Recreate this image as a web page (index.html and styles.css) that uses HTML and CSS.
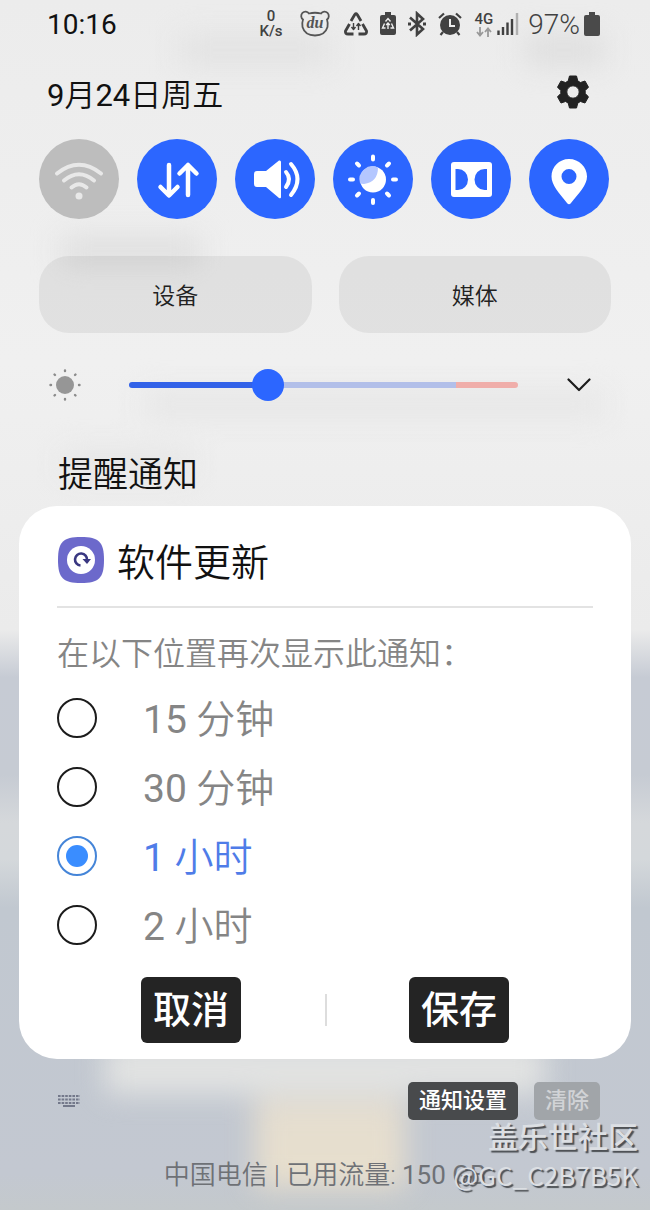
FILE: index.html
```html
<!DOCTYPE html>
<html lang="zh-CN">

<head>
  <meta charset="UTF-8" />
  <meta name="viewport" content="width=device-width, initial-scale=1" />
  <title>通知面板</title>
  <link rel="stylesheet" href="styles.css">
</head>

<body>
  <div class="panel">
    <header class="status-bar">
      <time class="clock">10:16</time>
      <div class="status-icons">
        <div class="speed"><span>0</span><span>K/s</span></div>
        <svg class="bear" width="30" height="28" viewBox="0 0 30 28" fill="none" stroke="#555" stroke-width="1.8">
          <path d="M9 3.500Q15 2 21 3.500A4.300 4.300 0 1 1 27 9.500Q28 12 27.500 17Q25 25.500 15 25.500Q5 25.500 2.500 17Q2 12 3 9.500A4.300 4.300 0 1 1 9 3.500Z" />
          <text x="15" y="18" text-anchor="middle" class="bear-text">du</text>
        </svg>
        <svg width="24" height="24" viewBox="0 0 24 24" fill="none" stroke="#414141" stroke-width="2.8" stroke-linejoin="round">
          <path d="M7 9L10.800 2.500Q12 1 13.200 2.500L17 9M18.500 12L22.500 19Q23 22 20 22H14.500M9.500 22H4Q1 22 1.500 19L5.500 12" />
          <path d="M9.500 11V17M7.500 15L9.500 17.500L11.500 15M14.500 18V12M12.500 14L14.500 11.500L16.500 14" stroke-width="1.4" />
        </svg>
        <svg width="16" height="24" viewBox="0 0 16 24">
          <path d="M5 0H11V3H14Q16 3 16 5V21Q16 23 14 23H2Q0 23 0 21V5Q0 3 2 3H5Z" fill="#444" />
          <path d="M5.500 9.500L8 6.500L10.500 9.500M11.500 11.500L13.500 16H10.500M5.500 16H2.500L4.500 11.500M8 17V11M6.200 13L8 11L9.800 13" fill="none" stroke="#eee" stroke-width="1.4" />
        </svg>
        <svg width="18" height="26" viewBox="0 0 18 26" fill="none" stroke="#414141" stroke-width="2.6">
          <path d="M2 6.500L15 18L9 23.500V2.500L15 8L2 19.500" />
          <path d="M0 13H3M15 13H18" stroke-width="2.800" />
        </svg>
        <svg width="24" height="24" viewBox="0 0 24 24" fill="none" stroke="#414141">
          <circle cx="12" cy="13" r="10" fill="#414141" stroke="none" />
          <path d="M1 6L6 1.500M18 1.500L23 6M5 20L2.500 23M19 20L21.500 23" stroke-width="2.200" />
          <path d="M12 7V14H17" stroke="#eee" stroke-width="2" />
        </svg>
        <div class="network">
          <span>4G</span>
          <svg width="16" height="10" viewBox="0 0 16 10" fill="none" stroke="#999" stroke-width="1.8">
            <path d="M4 0V8M1 5L4 8.500L7 5M12 10V2M9 5L12 1.500L15 5" />
          </svg>
        </div>
        <svg class="signal" width="22" height="22" viewBox="0 0 22 22" stroke-width="2.4">
          <path d="M1.500 22V17.500M6 22V14M10.500 22V9.500M15 22V6" stroke="#414141" />
          <path d="M20 22V0" stroke="#b0b0b0" />
        </svg>
        <span class="percent">97%</span>
        <svg class="battery" width="16" height="24" viewBox="0 0 16 24">
          <path d="M5 0H11V3H14Q16 3 16 5V22Q16 24 14 24H2Q0 24 0 22V5Q0 3 2 3H5Z" fill="#4a4a4a" />
        </svg>
      </div>
    </header>

    <div class="date-row">
      <span class="date"><span class="num">9</span>月<span class="num">24</span>日周五</span>
      <button class="icon-btn" type="button" aria-label="设置">
        <svg width="32" height="34" viewBox="0 0 32 34">
          <path fill="#222" stroke="#222" stroke-linejoin="round" fill-rule="evenodd" d="M12.500 1H19.500L20.800 6L23.500 7.500L28 6L31.500 12.200L28.200 15.500V18.500L31.500 21.800L28 28L23.500 26.500L20.800 28L19.500 33H12.500L11.200 28L8.500 26.500L4 28L0.500 21.800L3.800 18.500V15.500L0.500 12.200L4 6L8.500 7.500L11.200 6ZM16 10.800A6.200 6.200 0 1 0 16 23.200A6.200 6.200 0 1 0 16 10.800Z" />
        </svg>
      </button>
    </div>

    <div class="toggles">
      <button class="toggle off" type="button" aria-label="WLAN">
        <svg viewBox="0 0 80 80" fill="none" stroke="#e8e8e8" stroke-width="4" stroke-linecap="round">
          <path d="M18 34.500Q40 17 62 34.500M25 41.500Q40 29 55 41.500M32.500 48.500Q40 42 47.500 48.500" />
          <circle cx="40" cy="57" r="3.500" fill="#e8e8e8" stroke="none" />
        </svg>
      </button>
      <button class="toggle" type="button" aria-label="移动数据">
        <svg viewBox="0 0 80 80" fill="none" stroke="#fff" stroke-width="4.5" stroke-linecap="round" stroke-linejoin="round">
          <path d="M32 26V56M23.500 48L32 56.500L40.500 48M51 56V26M42.500 34.500L51 26L59.500 34.500" />
        </svg>
      </button>
      <button class="toggle" type="button" aria-label="声音">
        <svg viewBox="0 0 80 80" fill="none" stroke="#fff" stroke-width="4" stroke-linecap="round">
          <path d="M22 32H31L44 21.500Q46 21 46 23V58Q46 60 44 59L31 48H22Q19 48 19 45V35Q19 32 22 32Z" fill="#fff" stroke="none" />
          <path d="M51 33Q57 40 51 48M56 25Q69 40 56 56" />
        </svg>
      </button>
      <button class="toggle" type="button" aria-label="自动亮度">
        <svg viewBox="0 0 80 80" stroke="#fff" stroke-width="4" stroke-linecap="round">
          <circle cx="40" cy="40.500" r="13" fill="#fff" stroke="none" />
          <path d="M27 44A13 13 0 0 1 45 28.500Q45 43 31 45Q28 45 27 44Z" fill="#b4c7ff" stroke="none" />
          <path d="M40 17.500V20.500M40 61V64M17 40.500H20M60 40.500H63M24 24.500L26 26.500M54 54.500L56 56.500M56 24.500L54 26.500M26 54.500L24 56.500" />
        </svg>
      </button>
      <button class="toggle" type="button" aria-label="杜比全景声">
        <svg viewBox="0 0 80 80">
          <rect x="20" y="23" width="41" height="35" rx="3" fill="#fff" />
          <path d="M24.500 30H27A10 10.500 0 0 1 27 51H24.500ZM56 30H53.500A10 10.500 0 0 0 53.500 51H56Z" fill="#2c66ff" />
        </svg>
      </button>
      <button class="toggle" type="button" aria-label="位置信息">
        <svg viewBox="0 0 80 80">
          <path fill="#fff" fill-rule="evenodd" d="M40 20C30 20 22.500 28 22.500 37.500C22.500 46 30 54 38 64Q40 66.500 42 64C50 54 58 46 58 37.500C58 28 50 20 40 20ZM40 30A7.500 7.500 0 1 0 40 45A7.500 7.500 0 1 0 40 30Z" />
        </svg>
      </button>
    </div>

    <div class="tabs">
      <button class="tab" type="button">设备</button>
      <button class="tab" type="button">媒体</button>
    </div>

    <div class="brightness">
      <svg width="34" height="34" viewBox="0 0 34 34" stroke="#8b8b8b" stroke-width="2.4" stroke-linecap="round">
        <circle cx="17" cy="17" r="9" fill="#969696" stroke="none" />
        <path d="M17 2.500V3M17 31V31.500M2.500 17H3M31 17H31.500M6.500 6.500L7 7M27 27L27.500 27.500M27.500 6.500L27 7M7 27L6.500 27.500" />
      </svg>
      <input class="slider" type="range" min="0" max="200" value="69" aria-label="亮度">
      <button class="icon-btn" type="button" aria-label="展开">
        <svg width="24" height="14" viewBox="0 0 24 14" fill="none" stroke="#1c1c1c" stroke-width="2.2" stroke-linecap="round" stroke-linejoin="round">
          <path d="M1.500 1.500L12 12L22.500 1.500" />
        </svg>
      </button>
    </div>

    <h2 class="section-title">提醒通知</h2>

    <form class="card">
      <div class="card-head">
        <svg width="46" height="46" viewBox="0 0 46 46">
          <path d="M23 0C41 0 46 5 46 23S41 46 23 46S0 41 0 23S5 0 23 0Z" fill="#6c69cb" />
          <circle cx="23" cy="23" r="14" fill="#fff" />
          <path d="M22.500 28.500A6 6 0 1 1 29 23" fill="none" stroke="#393781" stroke-width="2.600" />
          <path d="M24.500 22H33L29 27Z" fill="#393781" />
        </svg>
        <h1>软件更新</h1>
      </div>
      <fieldset class="options">
        <legend>在以下位置再次显示此通知：</legend>
        <label class="option"><input type="radio" name="snooze"><span class="option-text"><span class="num">15</span> 分钟</span></label>
        <label class="option"><input type="radio" name="snooze"><span class="option-text"><span class="num">30</span> 分钟</span></label>
        <label class="option"><input type="radio" name="snooze" checked><span class="option-text"><span class="num">1</span> 小时</span></label>
        <label class="option"><input type="radio" name="snooze"><span class="option-text"><span class="num">2</span> 小时</span></label>
      </fieldset>
      <div class="actions">
        <div class="action"><button class="dark-btn" type="button">取消</button></div>
        <div class="action"><button class="dark-btn" type="button">保存</button></div>
      </div>
    </form>

    <div class="footer">
      <svg width="22" height="12" viewBox="0 0 22 12" stroke="#73788a" stroke-width="2">
        <path d="M0 1H22M0 4.500H22M0 8H22" stroke-dasharray="2.600 1" />
        <path d="M5 11H17" />
      </svg>
      <div class="footer-btns">
        <button class="small-btn" type="button">通知设置</button>
        <button class="small-btn faded" type="button">清除</button>
      </div>
    </div>
    <p class="carrier">中国电信 | 已用流量: <span class="num">150 GB</span></p>

    <div class="watermark">
      <div class="site">盖乐世社区</div>
      <div>@GC_C2B7B5K</div>
    </div>
  </div>
</body>

</html>
```
FILE: styles.css
```css
* {
  box-sizing: border-box;
}

body {
  margin: 0;
  font-family: Roboto, "Noto Sans CJK SC", sans-serif;
  color: #111;
}

button {
  border: 0;
  padding: 0;
  background: none;
  font-family: inherit;
  color: inherit;
}

svg {
  display: block;
  flex: none;
}

.num {
  font-weight: 400;
}

.panel {
  position: relative;
  z-index: 0;
  min-height: 100vh;
  overflow: hidden;
  background: linear-gradient(#ececec, #f0f0f0 30%, #ebebeb 52%, #c6cbd4 56%, #c6cbd3 64%, #d5d8db 68%, #d4d8db 71%, #c1c8d0 75%, #c3c8d1 97%, #c4c9cc);
}

/* blurred shapes of the screen behind the panel */
.panel::before {
  content: "";
  position: absolute;
  inset: 0;
  z-index: -1;
  filter: blur(14px);
  background:
    linear-gradient(#e4ddd0, #e8dfcc) 51% 98% / 150px 90px,
    linear-gradient(#e2e3e2, #e2e3e2) 50% 90% / 440px 50px,
    linear-gradient(#e2e2e2, #e2e2e2) 36% 3% / 150px 30px,
    linear-gradient(#dedede, #dedede) 92% 3% / 80px 30px,
    linear-gradient(#dfdfdf, #dfdfdf) 12% 20% / 140px 30px,
    linear-gradient(#e6e6e6, #e6e6e6) 75% 33% / 460px 26px,
    linear-gradient(#e6e6e6, #e6e6e6) 12% 38% / 130px 26px;
  background-repeat: no-repeat;
}

.status-bar {
  display: flex;
  justify-content: space-between;
  align-items: center;
  height: 48px;
  padding: 0 50px 0 47px;
}

.clock {
  font-size: 28px;
}

.status-icons {
  display: flex;
  align-items: center;
  gap: 12px;
  color: #414141;
}

.speed,
.network {
  display: flex;
  flex-direction: column;
  align-items: center;
  font-size: 15px;
  font-weight: 500;
  line-height: 15px;
}

.bear {
  margin: 0 2px 0 6px;
}

.bear-text {
  font: italic bold 16px "Liberation Serif", serif;
  fill: #555;
  stroke: none;
}

.signal {
  margin-left: -8px;
}

.percent {
  margin-left: -3px;
  font-size: 28px;
  font-weight: 300;
}

.battery {
  margin-left: -8px;
}

.date-row {
  display: flex;
  justify-content: space-between;
  align-items: center;
  height: 91px;
  padding: 0 61px 3px 47px;
}

.date {
  font-size: 31px;
  font-weight: 350;
}

.toggles {
  display: flex;
  justify-content: space-between;
  padding: 0 41px 0 39px;
}

.toggle {
  width: 80px;
  height: 80px;
  border-radius: 50%;
  background: #2c66ff;
}

.toggle.off {
  background: #bdbdbd;
}

.tabs {
  display: flex;
  gap: 27px;
  padding: 37px 39px 0;
}

.tab {
  flex: 1;
  height: 77px;
  padding-bottom: 2px;
  border-radius: 30px;
  background: rgba(0, 0, 0, 0.06);
  font-size: 23px;
  font-weight: 350;
  color: #222;
}

.brightness {
  display: flex;
  align-items: center;
  height: 104px;
  padding: 0 59px 0 48px;
}

.slider {
  appearance: none;
  flex: 1;
  height: 32px;
  margin: 0 49px 0 47px;
  background: none;
}

.slider::-webkit-slider-runnable-track {
  height: 6px;
  border-radius: 3px;
  background: linear-gradient(90deg, #3262e8 36%, #b2bfe9 36%, #b2bfe9 84%, #f0aeaa 84%);
}

.slider::-webkit-slider-thumb {
  appearance: none;
  width: 32px;
  height: 32px;
  margin-top: -13px;
  border-radius: 50%;
  background: #2c66ff;
}

.section-title {
  margin: 0;
  padding: 8px 0 0 58px;
  font-size: 35px;
  font-weight: 350;
  line-height: 61px;
}

.card {
  margin: 0 19px;
  padding: 0 38px 16px;
  border-radius: 38px;
  background: #fff;
}

.card-head {
  display: flex;
  align-items: center;
  gap: 13px;
  height: 102px;
  padding: 7px 0 0 1px;
  border-bottom: 2px solid #e3e3e3;
}

.card-head h1 {
  margin: 0;
  padding-top: 6px;
  font-size: 38px;
  font-weight: 350;
  line-height: 46px;
}

.options {
  margin: 0;
  padding: 0;
  border: 0;
  color: #858585;
}

.options legend {
  padding: 22px 0 5px;
  font-size: 32px;
  font-weight: 350;
  line-height: 48px;
}

.option {
  display: flex;
  align-items: center;
  gap: 46px;
  height: 69px;
  font-size: 39px;
  font-weight: 350;
}

.option input {
  appearance: none;
  display: grid;
  place-items: center;
  width: 40px;
  height: 40px;
  margin: 0;
  border: 2px solid #1c1c1c;
  border-radius: 50%;
}

.option input:checked {
  border-color: #4585d8;
}

.option input:checked::before {
  content: "";
  width: 22px;
  height: 22px;
  border-radius: 50%;
  background: #3a8dff;
}

.option-text {
  padding-bottom: 3px;
}

.option input:checked + .option-text {
  color: #4f7ce8;
}

.actions {
  display: flex;
  padding-top: 18px;
}

.action {
  display: flex;
  flex: 1;
  justify-content: center;
}

.action + .action {
  background: linear-gradient(#ddd, #ddd) left center / 2px 32px no-repeat;
}

.dark-btn {
  padding: 0 12px;
  border-radius: 6px;
  background: #242424;
  color: #fff;
  font-size: 38px;
  font-weight: 500;
  line-height: 66px;
}

.footer {
  display: flex;
  justify-content: space-between;
  align-items: center;
  padding: 23px 50px 0 58px;
}

.footer-btns {
  display: flex;
  gap: 16px;
}

.small-btn {
  padding: 0 11px;
  border-radius: 5px;
  background: #484a4c;
  color: #fff;
  font-size: 22px;
  font-weight: 500;
  line-height: 38px;
}

.small-btn.faded {
  background: #a1a5a9;
  color: #d1d3d6;
}

.carrier {
  margin: 0;
  padding: 36px 0 16px;
  text-align: center;
  font-size: 26px;
  font-weight: 350;
  line-height: 38px;
  color: #6e7176;
}

/* forum stamp lying over the corner of the screen */
.watermark {
  position: absolute;
  right: 12px;
  bottom: 16px;
  text-align: right;
  font-family: "Noto Sans CJK SC", sans-serif;
  font-size: 26px;
  line-height: 39px;
  color: #dcdfe3;
  text-shadow: 2px 2px 1px #4d5054;
}

.watermark .site {
  font-size: 30px;
  font-weight: 500;
}
```
